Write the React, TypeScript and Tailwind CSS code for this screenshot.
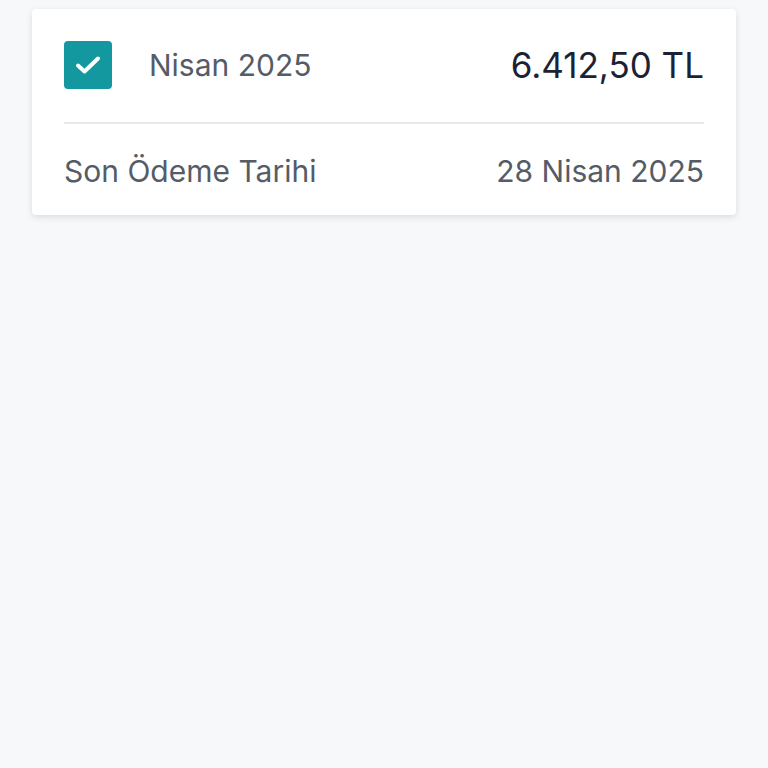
import React from 'react';

const CheckIcon = () => (
  <svg width="48" height="48" viewBox="0 0 48 48" fill="none" stroke="white" strokeWidth="4" strokeLinecap="round" strokeLinejoin="round">
    <path d="M14 24.5l6.5 6L34 17.5" />
  </svg>
);

export default function App() {
  return (
    <div className="min-h-[768px] w-full bg-[#f7f8fa] px-8 pt-[9px]" style={{ fontFamily: 'Inter, "Noto Sans", sans-serif' }}>
      <div className="bg-white rounded-[4px] shadow-[0_2px_6px_rgba(0,0,0,0.12)] px-8 pt-8 pb-5">
        <div className="flex h-12 items-center justify-between leading-none">
          <div className="flex items-center">
            <div className="w-12 h-12 rounded-[4px] bg-[#13989f] flex items-center justify-center">
              <CheckIcon />
            </div>
            <span className="ml-[37px] text-[30px] text-[#555c68]">Nisan 2025</span>
          </div>
          <span className="text-[35px] text-[#1b2236]">6.412,50 TL</span>
        </div>
        <div className="mt-[33px] h-[2px] bg-[#e7e8ea]" />
        <div className="mt-[23px] flex h-12 items-center justify-between text-[30px] leading-none text-[#555c68]">
          <span>Son Ödeme Tarihi</span>
          <span>28 Nisan 2025</span>
        </div>
      </div>
    </div>
  );
}
